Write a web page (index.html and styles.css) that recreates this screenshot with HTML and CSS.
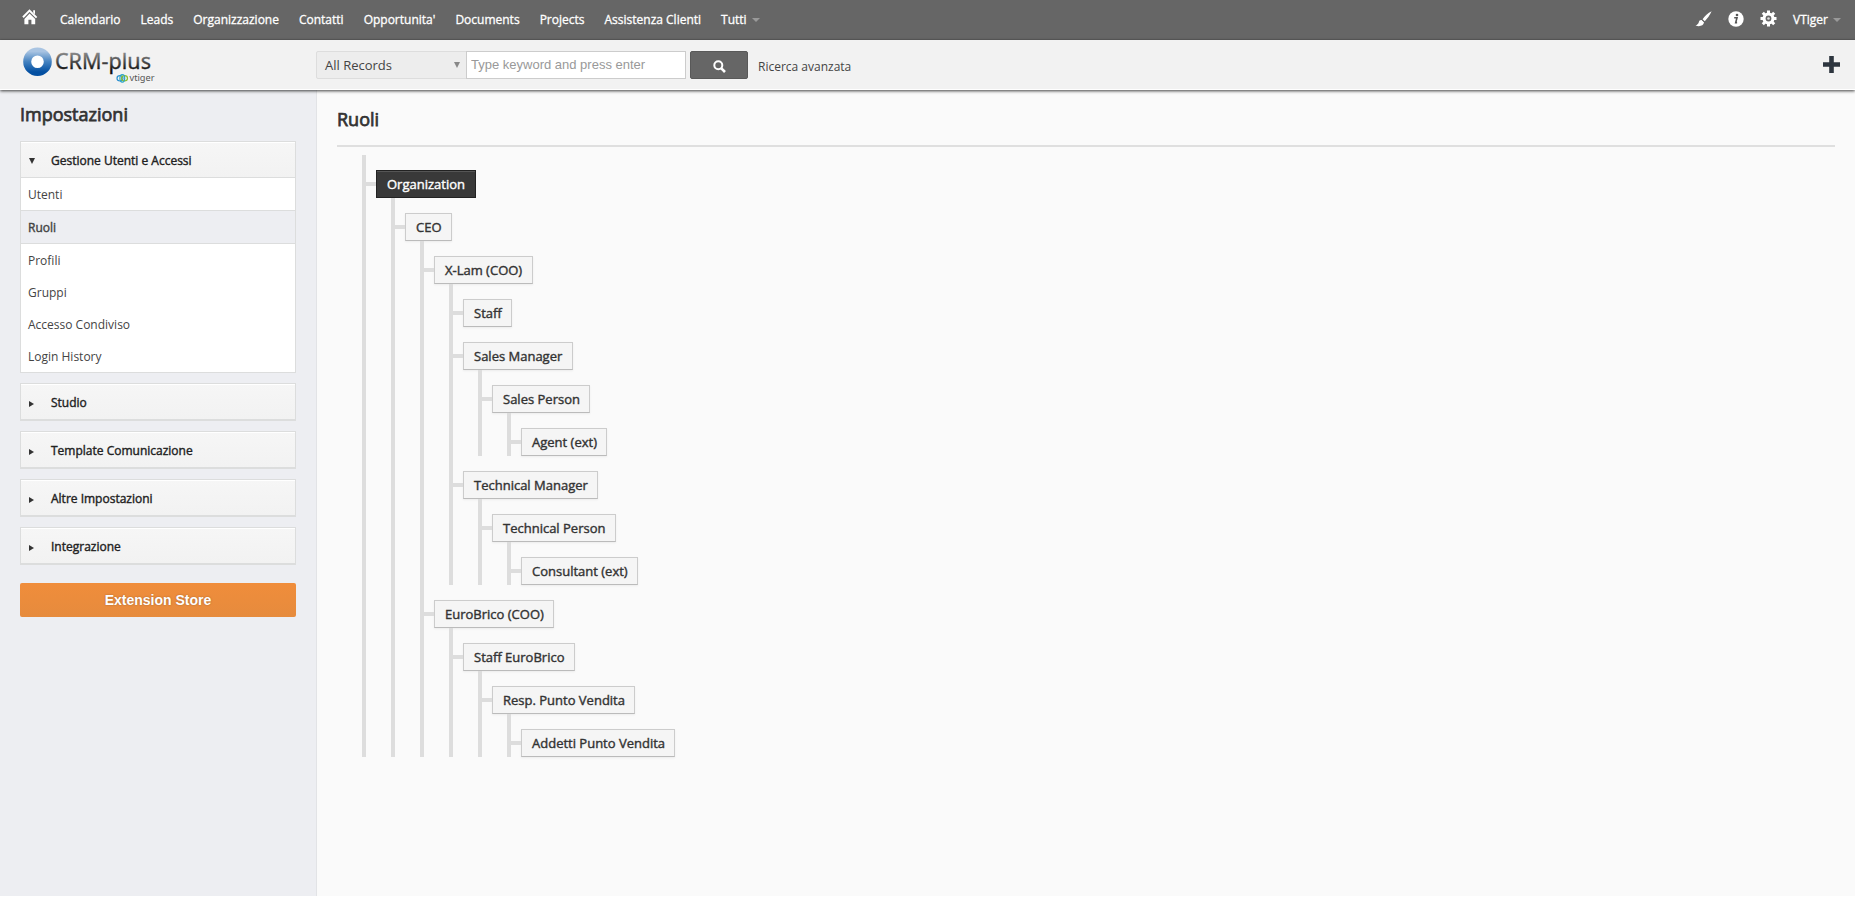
FILE: index.html
```html
<!DOCTYPE html>
<html lang="it">
<head>
<meta charset="utf-8">
<title>Ruoli</title>
<link rel="stylesheet" href="styles.css">
</head>
<body>
<nav class="navbar">
  <a class="home"><svg width="16" height="17" viewBox="0 0 16 17"><path d="M1 8.2 7.5 1.6 14.6 8.6" fill="none" stroke="#fff" stroke-width="2"/><path d="M11.2 1.2h1.8v4.2l-1.8-1.8zM7.6 4.6l5.6 5.4v5.2H9.4v-4.4H6.4v4.4H2.4V10z" fill="#fff"/></svg></a>
  <a>Calendario</a><a>Leads</a><a>Organizzazione</a><a>Contatti</a><a>Opportunita'</a><a>Documents</a><a>Projects</a><a>Assistenza Clienti</a><a>Tutti<i class="caret"></i></a>
  <div class="tools">
    <svg width="17" height="16" viewBox="0 0 17 16"><path d="M16.6.2C13 2 9.500 5.300 7.600 8.300l2.200 2C12.300 7.500 15 4 16.600.2zM6.900 9.200c-1.600-.5-2.700.5-3.100 2-.3 1.300-1.400 2.400-3.300 3.400 3.800 1.200 8.100.5 8.500-3.300z" fill="#fff"/><path d="m6.700 8.700 2.800 2.600" stroke="#666" stroke-width=".7"/></svg>
    <svg width="16" height="16" viewBox="0 0 16 16"><circle cx="8" cy="8" r="7.700" fill="#fff"/><circle cx="9" cy="4" r="1.300" fill="#555"/><path d="M6.200 6.700h2.800L7.700 11.600h1.400" fill="none" stroke="#555" stroke-width="1.600"/></svg>
    <svg width="17" height="17" viewBox="-8.500 -8.500 17 17"><g stroke="#fff" stroke-width="3"><path d="M0-8V8M-8 0H8M-5.700-5.700 5.700 5.700M-5.700 5.700 5.700-5.700"/></g><circle r="6" fill="#fff"/><circle r="2.900" fill="#666"/><circle r="1.300" fill="#ddd"/></svg>
    <span class="user">VTiger<i class="caret"></i></span>
  </div>
</nav>
<header class="header">
  <svg class="logo" width="140" height="42" viewBox="0 0 140 42">
    <defs>
      <linearGradient id="ring" x1="0" y1="0" x2="0" y2="1"><stop offset="0" stop-color="#a9c4e2"/><stop offset=".5" stop-color="#4482c0"/><stop offset="1" stop-color="#0450a2"/></linearGradient>
      <linearGradient id="ink" gradientUnits="userSpaceOnUse" x1="0" y1="8" x2="0" y2="25"><stop offset="0" stop-color="#888"/><stop offset="1" stop-color="#111"/></linearGradient>
    </defs>
    <circle cx="17.500" cy="16.700" r="10.300" fill="#fff" stroke="url(#ring)" stroke-width="8"/>
    <text class="brand" x="35" y="24.300" textLength="96" lengthAdjust="spacingAndGlyphs" fill="url(#ink)" stroke="url(#ink)">CRM-plus</text>
    <g fill="none" stroke-width="1.200"><ellipse cx="100" cy="33.300" rx="3" ry="2.700" stroke="#2c8fd0"/><ellipse cx="104.500" cy="33.300" rx="3" ry="2.700" stroke="#8bbf2f"/><ellipse cx="102.300" cy="33.300" rx="2.400" ry="3.800" stroke="#29a3c9"/></g>
    <text class="subbrand" x="109.500" y="36.300" textLength="25" lengthAdjust="spacingAndGlyphs">vtiger</text>
  </svg>
  <div class="search">
    <div class="select">All Records<i class="arrow-down"></i></div>
    <input class="keyword" type="text" placeholder="Type keyword and press enter">
    <button class="go"><svg width="13" height="13" viewBox="0 0 13 13"><circle cx="5.300" cy="5.300" r="4" fill="none" stroke="#fff" stroke-width="2"/><path d="m8.300 8.300 3.700 3.700" stroke="#fff" stroke-width="2.600"/></svg></button>
    <a class="advanced">Ricerca avanzata</a>
  </div>
  <svg class="plus" width="17" height="17" viewBox="0 0 17 17"><path d="M8.500 0v17M0 8.500h17" stroke="#2e363f" stroke-width="4.600"/></svg>
</header>
<main class="page">
  <aside class="sidebar">
    <h1 class="title">Impostazioni</h1>
    <section class="group open">
      <h2 class="group-head"><i class="tri down"></i>Gestione Utenti e Accessi</h2>
      <a class="entry">Utenti</a>
      <a class="entry current">Ruoli</a>
      <a class="entry">Profili</a>
      <a class="entry">Gruppi</a>
      <a class="entry">Accesso Condiviso</a>
      <a class="entry">Login History</a>
    </section>
    <section class="group"><h2 class="group-head"><i class="tri"></i>Studio</h2></section>
    <section class="group"><h2 class="group-head"><i class="tri"></i>Template Comunicazione</h2></section>
    <section class="group"><h2 class="group-head"><i class="tri"></i>Altre Impostazioni</h2></section>
    <section class="group"><h2 class="group-head"><i class="tri"></i>Integrazione</h2></section>
    <button class="store">Extension Store</button>
  </aside>
  <section class="content">
    <h1 class="title">Ruoli</h1>
    <ul class="tree">
      <li><span class="role root">Organization</span>
        <ul>
          <li><span class="role">CEO</span>
            <ul>
              <li><span class="role">X-Lam (COO)</span>
                <ul>
                  <li><span class="role">Staff</span></li>
                  <li><span class="role">Sales Manager</span>
                    <ul><li><span class="role">Sales Person</span>
                      <ul><li><span class="role">Agent (ext)</span></li></ul></li></ul></li>
                  <li><span class="role">Technical Manager</span>
                    <ul><li><span class="role">Technical Person</span>
                      <ul><li><span class="role">Consultant (ext)</span></li></ul></li></ul></li>
                </ul></li>
              <li><span class="role">EuroBrico (COO)</span>
                <ul><li><span class="role">Staff EuroBrico</span>
                  <ul><li><span class="role">Resp. Punto Vendita</span>
                    <ul><li><span class="role">Addetti Punto Vendita</span></li></ul></li></ul></li></ul></li>
            </ul></li>
        </ul></li>
    </ul>
  </section>
</main>
</body>
</html>
```
FILE: styles.css
```css
* { box-sizing: border-box; }
body {
  margin: 0;
  background: #fff;
  color: #444;
  font: 12px/20px "Open Sans", sans-serif;
}
h1, h2, ul { margin: 0; padding: 0; }

.navbar {
  display: flex;
  align-items: center;
  height: 40px;
  padding-left: 12px;
  background: #666;
  border-bottom: 1px solid #606060;
  color: #fff;
  -webkit-text-stroke: 0.3px #fff;
}
.navbar a { padding: 0 10px; }
.navbar .home { display: flex; width: 38px; padding: 0 0 4px 10px; }
.caret {
  display: inline-block;
  margin-left: 5px;
  vertical-align: 2px;
  border: 4px solid transparent;
  border-top-color: #999;
  border-bottom: 0;
}
.tools {
  display: flex;
  align-items: center;
  gap: 16px;
  margin-left: auto;
  padding-right: 14px;
}
.tools svg { margin-bottom: 2px; }

.header {
  position: relative;
  display: flex;
  align-items: flex-start;
  height: 50px;
  padding-left: 20px;
  background: #f2f2f2;
  border-bottom: 1px solid #fff;
  box-shadow: 0 1px 3px rgba(0, 0, 0, .75);
}
.logo { margin-top: 5px; overflow: visible; }
.brand { font: 21px/22px "Noto Sans", sans-serif; stroke-width: 0.3px; }
.subbrand { font: 8px/8px "Noto Sans", sans-serif; fill: #555; }
.search { display: flex; margin: 11px 0 0 156px; }
.select {
  display: flex;
  align-items: center;
  justify-content: space-between;
  width: 151px;
  height: 28px;
  padding: 0 6px 0 8px;
  background: #ededed;
  border: 1px solid #ddd;
  border-radius: 2px 0 0 2px;
  font-size: 13px;
}
.arrow-down {
  border: 3.5px solid transparent;
  border-top: 6px solid #888;
  border-bottom: 0;
}
.keyword {
  width: 220px;
  height: 28px;
  margin-left: -1px;
  padding: 0 4px 2px;
  border: 1px solid #ccc;
  background: #fff;
  font: 13px "Liberation Sans", sans-serif;
}
.keyword::placeholder { color: #999; }
.go {
  display: flex;
  align-items: center;
  justify-content: center;
  width: 58px;
  height: 28px;
  margin-left: 4px;
  padding: 3px 0 0;
  background: #666;
  border: 1px solid #595959;
  border-radius: 2px;
}
.advanced { margin: 6px 0 0 10px; }
.plus { margin: 16px 15px 0 auto; }

.page { display: flex; height: 806px; }
.sidebar {
  width: 317px;
  padding: 14px 20px 0;
  background: #edeef2;
  border-right: 1px solid #e2e3e6;
}
.title {
  color: #333;
  font-size: 18px;
  font-weight: 400;
  line-height: 20px;
  -webkit-text-stroke: 0.75px #333;
}
.sidebar .title { margin-bottom: 17px; }
.group {
  height: 38px;
  margin-bottom: 10px;
  background: #fff;
  border: 1px solid #dcdddd;
  border-bottom-width: 2px;
}
.group.open { height: auto; border-bottom-width: 1px; }
.group-head {
  display: flex;
  align-items: center;
  height: 35px;
  padding: 2px 0 0 8px;
  background: linear-gradient(#f6f6f6, #f2f2f2);
  box-shadow: inset 0 1px #fff;
  color: #222;
  font-size: 12px;
  font-weight: 400;
  -webkit-text-stroke: 0.4px #222;
}
.open .group-head { height: 36px; border-bottom: 1px solid #dcdddd; }
.tri {
  width: 5px;
  margin: 2px 17px 0 0;
  border: 3.5px solid transparent;
  border-left: 5px solid #333;
  border-right: 0;
}
.tri.down {
  width: 6px;
  margin: 1px 16px 0 0;
  border: 3px solid transparent;
  border-top: 6px solid #333;
  border-bottom: 0;
}
.entry { display: block; height: 32px; padding: 7px 7px 0; }
.entry.current {
  height: 34px;
  background: #edeef2;
  border: solid #dcdddd;
  border-width: 1px 0;
  -webkit-text-stroke: 0.4px #444;
}
.store {
  display: block;
  width: 276px;
  height: 34px;
  margin-top: 18px;
  background: linear-gradient(#f08d3b, #e68b3d);
  border: 0;
  border-radius: 2px;
  color: #fff;
  font: bold 14px "Liberation Sans", sans-serif;
  text-shadow: 0 0 2px rgba(0, 0, 0, .3);
}

.content { flex: 1; padding: 19px 20px 0; background: #fafafa; }
.content .title {
  height: 38px;
  border-bottom: 2px solid #dfdfdf;
}
.tree { margin: 8px 0 0 25px; }
.tree, .tree ul {
  display: flow-root;
  border-left: 4px solid #ddd;
  list-style: none;
}
.tree ul { margin-left: 15px; }
.tree li { position: relative; margin-top: 15px; padding-left: 10px; }
.tree li::before {
  content: "";
  position: absolute;
  left: 0;
  top: 12px;
  width: 10px;
  height: 4px;
  background: #ddd;
}
.role {
  display: block;
  width: max-content;
  height: 28px;
  padding: 3px 9.400px 3px 10px;
  background: #f5f5f5;
  border: 1px solid #ccc;
  border-bottom-color: #bbb;
  box-shadow: 0 1px 2px rgba(0, 0, 0, .06);
  color: #333;
  font-size: 13px;
  -webkit-text-stroke: 0.4px #333;
}
.role.root {
  padding-right: 10px;
  background: #393939;
  border-color: #222;
  box-shadow: inset 0 1px #555;
  color: #fff;
  -webkit-text-stroke-color: #fff;
}
```
